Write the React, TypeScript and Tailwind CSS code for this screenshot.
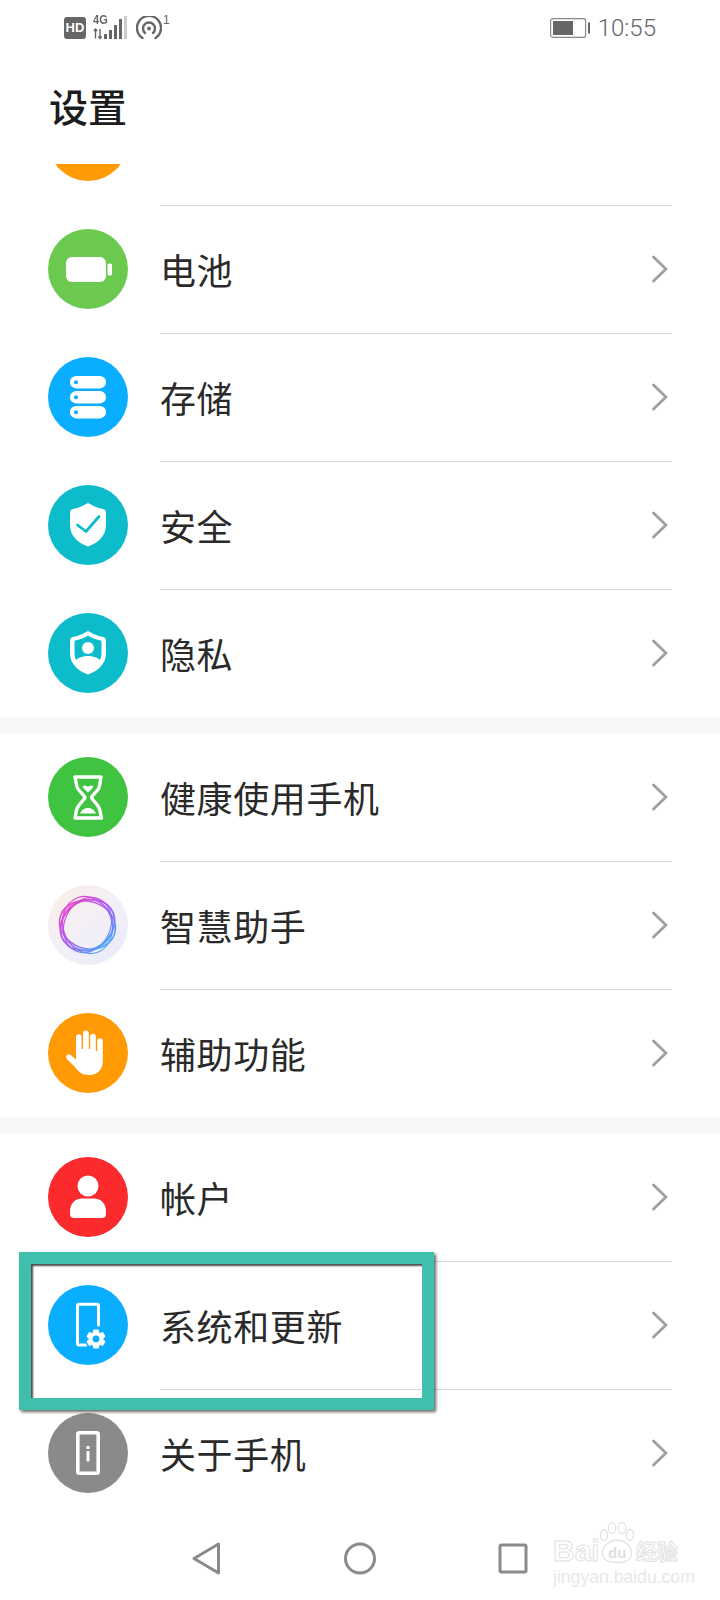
import React from "react";

const cjk = "font-['Noto_Sans_CJK_SC','Noto_Sans',sans-serif]";

function Circle({ bg, children }: { bg: string; children: React.ReactNode }) {
  return (
    <div className={`w-20 h-20 rounded-full shrink-0 ${bg}`}>
      <svg viewBox="0 0 80 80" className="w-20 h-20">{children}</svg>
    </div>
  );
}

const Battery = () => (
  <Circle bg="bg-[#6cc94f]">
    <rect x="18" y="28" width="40" height="25" rx="6" fill="#fff" />
    <rect x="59.5" y="34.5" width="4.5" height="12" rx="1.6" fill="#fff" />
  </Circle>
);
const Storage = () => (
  <Circle bg="bg-[#0aaeff]">
    {[19, 34, 49].map((y) => (
      <g key={y}>
        <rect x="22" y={y} width="36" height="12.4" rx="6.2" fill="#fff" />
        <circle cx="28" cy={y + 6.2} r="2" fill="#0aaeff" />
      </g>
    ))}
  </Circle>
);
const shield = "M40 18 C44 20.5 49 23 55 24 C57 24.4 58 25.6 58 27.5 V40 C58 51 50 58 40 61.5 C30 58 22 51 22 40 V27.5 C22 25.6 23 24.4 25 24 C31 23 36 20.5 40 18 Z";
const Security = () => (
  <Circle bg="bg-[#0cbccb]">
    <path d={shield} fill="#fff" />
    <path d="M29.5 40 L38 46.5 L51 31.5" fill="none" stroke="#0cbccb" strokeWidth="2.8" strokeLinecap="round" strokeLinejoin="round" />
  </Circle>
);
const Privacy = () => (
  <Circle bg="bg-[#0cbccb]">
    <path d={shield} fill="#fff" />
    <path d="M40 22.8 C44 25 48 26.8 53.5 27.8 V40 C53.5 42.5 53 44.8 52 47 C48.5 44 45 43 40 43 C35 43 31.5 44 28 47 C27 44.8 26.5 42.5 26.5 40 V27.8 C32 26.8 36 25 40 22.8 Z" fill="#0cbccb" />
    <circle cx="40" cy="35" r="6" fill="#fff" />
  </Circle>
);
const Hourglass = () => (
  <Circle bg="bg-[#40c340]">
    <path d="M27 20 H53 L51.5 29 C50.5 34.5 44.5 37 43.5 40.5 C44.5 44 50.5 47 51.8 53 L53.5 61 H27 L28.6 53 C30 47 36 44 37 40.5 C36 37 30 34.5 28.8 29 Z" fill="none" stroke="#fff" strokeWidth="3.4" strokeLinejoin="round" />
    <path d="M34.5 29.5 C37 27.5 39 29 40 30 C41 29 43 27.5 45.5 29.5 C44 32.5 41.5 33.5 40 35.5 C38.5 33.5 36 32.5 34.5 29.5 Z" fill="#fff" />
    <path d="M32 56.5 C34 52.5 37 51 40 51 C43 51 46 52.5 48 56.5 Z" fill="#fff" />
  </Circle>
);
const Assistant = () => (
  <Circle bg="bg-gradient-to-br from-[#f8efe6] via-[#f3eff6] to-[#e8ebfb]">
    <defs>
      <linearGradient id="ring" x1="0.15" y1="0.1" x2="0.85" y2="0.9">
        <stop offset="0" stopColor="#f23fc8" />
        <stop offset="0.5" stopColor="#a45ff0" />
        <stop offset="1" stopColor="#36b4f6" />
      </linearGradient>
      <mask id="ringMask" maskUnits="userSpaceOnUse" x="0" y="0" width="80" height="80">
        <g fill="none" stroke="#fff">
          <ellipse cx="39.5" cy="40" rx="28.5" ry="24" strokeWidth="1.8" transform="rotate(-35 39.5 40)" />
          <ellipse cx="39.5" cy="40" rx="28.5" ry="23.5" strokeWidth="1.5" transform="rotate(20 39.5 40)" />
          <ellipse cx="39.5" cy="40" rx="29" ry="24.5" strokeWidth="1.2" transform="rotate(70 39.5 40)" />
          <ellipse cx="39.5" cy="40" rx="28.5" ry="23" strokeWidth="1.2" transform="rotate(115 39.5 40)" />
          <circle cx="39.5" cy="40" r="25.5" strokeWidth="1.6" opacity="0.7" />
        </g>
      </mask>
    </defs>
    <rect x="8" y="8" width="64" height="64" fill="url(#ring)" mask="url(#ringMask)" />
  </Circle>
);
const Hand = () => (
  <Circle bg="bg-[#ff9a05]">
    <path d="M28 41 V24 a2.8 2.8 0 0 1 5.6 0 V36 H35 V20.5 a2.9 2.9 0 0 1 5.8 0 V36 H42.2 V23.5 a2.8 2.8 0 0 1 5.6 0 V38 H49.2 V28 a2.8 2.8 0 0 1 5.6 0 V48 C54.8 56 50 62 41 62 C34 62 30 58.5 27 54 L18.8 46 a2.8 2.8 0 0 1 3.6 -4.2 L28 46.5 Z" fill="#fff" />
  </Circle>
);
const Account = () => (
  <Circle bg="bg-[#fa2a2d]">
    <circle cx="40" cy="29" r="10.5" fill="#fff" />
    <path d="M22 54 C22 46 28 41.5 34 41.5 H46 C52 41.5 58 46 58 54 V57 A4 4 0 0 1 54 61 H26 A4 4 0 0 1 22 57 Z" fill="#fff" />
  </Circle>
);
const SystemIcon = () => (
  <Circle bg="bg-[#0aaeff]">
    <path d="M38 60 H31 A1.6 1.6 0 0 1 29.5 58.4 V20.8 A1.6 1.6 0 0 1 31 19.3 H49 A1.6 1.6 0 0 1 50.5 20.8 V40" fill="none" stroke="#fff" strokeWidth="3" strokeLinecap="round" />
    <circle cx="48" cy="54" r="11" fill="#0aaeff" />
    <g fill="#fff">
      {[0, 60, 120].map((a) => (
        <rect key={a} x="45" y="44.5" width="6" height="19" rx="1.2" transform={`rotate(${a} 48 54)`} />
      ))}
      <circle cx="48" cy="54" r="7.5" />
    </g>
    <circle cx="48" cy="54" r="3.4" fill="#0aaeff" />
  </Circle>
);
const About = () => (
  <Circle bg="bg-[#8a8a8a]">
    <rect x="29.8" y="19.8" width="20.4" height="40.4" rx="1.5" fill="none" stroke="#fff" strokeWidth="3.6" />
    <rect x="38.5" y="33" width="3" height="3" fill="#fff" />
    <rect x="38.5" y="38" width="3" height="10.5" fill="#fff" />
  </Circle>
);

function Row({ icon, label, last }: { icon: React.ReactNode; label: string; last?: boolean }) {
  return (
    <div className="h-32 pl-12 flex items-center relative">
      {icon}
      <div className={`ml-8 text-[36px] leading-none tracking-[0.6px] text-[#2a2a2a] ${cjk}`}>{label}</div>
      <svg className="absolute left-[650px] top-1/2 -translate-y-1/2" width="20" height="28" viewBox="0 0 20 28">
        <path d="M3.5 2 L16 14 L3.5 26" fill="none" stroke="#a0a0a0" strokeWidth="2.8" strokeLinecap="round" strokeLinejoin="round" />
      </svg>
      {!last && <div className="absolute left-40 right-12 -bottom-px h-px bg-[#d8d8d8]" />}
    </div>
  );
}

function Gap() {
  return <div className="h-4 bg-[#f7f7f7]" />;
}

function StatusBar() {
  return (
    <div className="h-[52px] pl-16 pr-[64px] flex items-start justify-between pt-4 text-[#666]">
      <div className="flex items-center h-6">
        <div className="w-[22px] h-[22px] rounded-[3px] bg-[#666] text-white text-[13px] font-bold leading-[22px] text-center font-['Liberation_Sans',sans-serif]">HD</div>
        <div className="relative w-[37px] h-[24px] ml-[7px]">
          <div className="absolute left-0 -top-[3px] text-[13px] font-bold leading-[13px] font-['Liberation_Sans',sans-serif] [transform:scaleX(0.85)] origin-left">4G</div>
          <svg width="37" height="24" viewBox="0 0 37 24" className="absolute left-0 top-0">
            <path d="M2.5 22.5 V13 M0.8 15 L2.5 13 L4.2 15 M7 13 V22.5 M5.3 20.5 L7 22.5 L8.7 20.5" fill="none" stroke="#666" strokeWidth="1.4" />
            <rect x="11" y="18" width="3" height="5" fill="#666" />
            <rect x="16" y="14" width="3" height="9" fill="#666" />
            <rect x="21" y="9" width="3" height="14" fill="#666" />
            <rect x="26" y="3" width="3" height="20" fill="#666" />
            <rect x="31" y="-1" width="3" height="24" fill="#ccc" />
          </svg>
        </div>
        <svg width="26" height="24" viewBox="0 0 26 24" className="ml-[6px]">
          <path d="M6.5 22 A12 12 0 1 1 19.5 22" fill="none" stroke="#666" strokeWidth="2.4" strokeLinecap="round" />
          <path d="M9 17 A6 6 0 1 1 17 17" fill="none" stroke="#666" strokeWidth="2.4" strokeLinecap="round" />
          <circle cx="13" cy="12.5" r="1.9" fill="#666" />
        </svg>
        <div className="text-[12px] leading-none self-start -mt-0.5 ml-px font-['Liberation_Sans',sans-serif]">1</div>
      </div>
      <div className="flex items-center h-6">
        <svg width="40" height="22" viewBox="0 0 40 22">
          <rect x="0.6" y="1.6" width="35" height="18.8" rx="2.5" fill="none" stroke="#888" strokeWidth="1.2" />
          <rect x="3" y="4" width="20" height="14" fill="#666" />
          <rect x="38" y="5.5" width="2" height="11" fill="#666" />
        </svg>
        <div className="ml-2 text-[24px] leading-none font-['Roboto',sans-serif] font-light">10:55</div>
      </div>
    </div>
  );
}

export default function App() {
  return (
    <div className="relative w-[720px] h-[1600px] bg-white overflow-hidden flex flex-col">
      <StatusBar />
      <div className={`h-[112px] pl-[49px] pt-[30px] text-[39px] leading-[46px] font-medium text-[#1c1c1c] shrink-0 ${cjk}`}>设置</div>
      <div className="h-[1336px] overflow-hidden shrink-0">
        <div className="-mt-[87px]">
          <Row icon={<Circle bg="bg-[#ff9a05]"><g /></Circle>} label="" />
          <Row icon={<Battery />} label="电池" />
          <Row icon={<Storage />} label="存储" />
          <Row icon={<Security />} label="安全" />
          <Row icon={<Privacy />} label="隐私" last />
          <Gap />
          <Row icon={<Hourglass />} label="健康使用手机" />
          <Row icon={<Assistant />} label="智慧助手" />
          <Row icon={<Hand />} label="辅助功能" last />
          <Gap />
          <Row icon={<Account />} label="帐户" />
          <Row icon={<SystemIcon />} label="系统和更新" />
          <Row icon={<About />} label="关于手机" last />
        </div>
      </div>
      <div className="absolute z-10 left-[19px] top-[1252px] w-[415px] h-[158px] border-[12px] border-[#3fbfac] shadow-[2px_2px_3px_rgba(0,0,0,0.6),inset_2px_2px_2px_rgba(0,0,0,0.7)]" />
      <div className="absolute left-0 right-0 bottom-0 h-[100px]">
        <svg width="720" height="100" viewBox="0 0 720 100" className="absolute left-0 top-0">
          <path d="M218.5 44 L194 58.5 L218.5 73 Z" fill="none" stroke="#8a8a8a" strokeWidth="3" strokeLinejoin="round" />
          <circle cx="360" cy="58.5" r="14.5" fill="none" stroke="#8a8a8a" strokeWidth="3" />
          <rect x="500" y="45" width="26" height="27" rx="1.5" fill="none" stroke="#8a8a8a" strokeWidth="3" />
          <g fill="none" stroke="#e2e2e2" strokeWidth="1.3">
            <ellipse cx="604" cy="35" rx="3.5" ry="5.5" />
            <ellipse cx="612" cy="28" rx="3.8" ry="5.5" />
            <ellipse cx="622" cy="28" rx="3.8" ry="5.5" />
            <ellipse cx="630" cy="35" rx="3.5" ry="5.5" />
            <path d="M604 58 C598 48 610 40 617 40 C624 40 636 48 630 58 C627 64 607 64 604 58 Z" />
          </g>
        </svg>
        <div className="absolute left-[553px] top-[36px] text-[30px] leading-[30px] font-bold text-transparent [-webkit-text-stroke:1px_#e2e2e2] font-['Liberation_Sans',sans-serif]">Bai</div>
        <div className="absolute left-[608px] top-[45px] text-[15px] leading-[15px] font-bold text-[#e0e0e0] font-['Liberation_Sans',sans-serif]">du</div>
        <div className={`absolute left-[636px] top-[38px] text-[21px] leading-[24px] font-bold text-transparent [-webkit-text-stroke:1px_#e2e2e2] ${cjk}`}>经验</div>
        <div className="absolute left-[553px] top-[68px] text-[17.6px] leading-[18px] text-[#e8e8e8] font-['Liberation_Sans',sans-serif]">jingyan.baidu.com</div>
      </div>
    </div>
  );
}
